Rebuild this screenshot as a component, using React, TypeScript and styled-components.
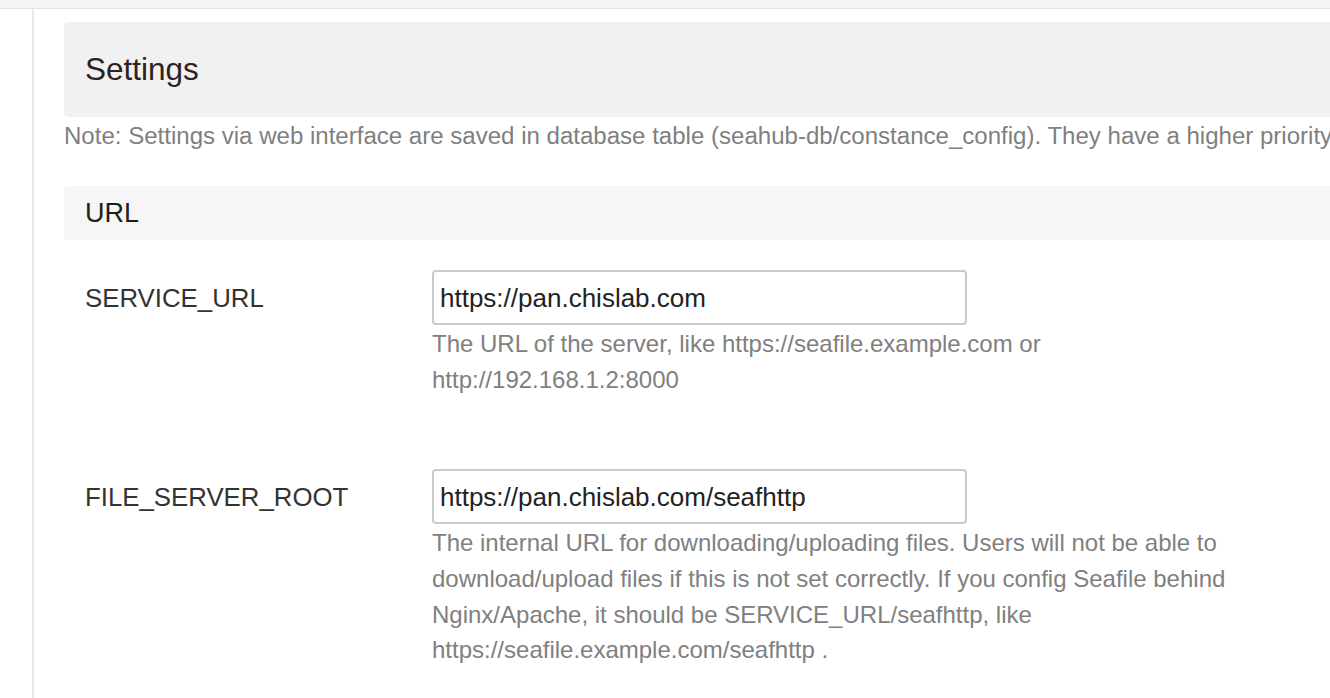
import React from "react";
import styled, { createGlobalStyle } from "styled-components";

const Global = createGlobalStyle`
  html, body { margin: 0; padding: 0; background: #fff; }
  body { font-family: "Liberation Sans", Arial, sans-serif; overflow: hidden; }
`;

const Page = styled.div`
  width: 1330px;
  height: 698px;
  display: flex;
  flex-direction: column;
  overflow: hidden;
`;

const TopBar = styled.div`
  height: 8px;
  flex-shrink: 0;
  background: #f4f4f4;
  border-bottom: 1px solid #e4e4e4;
`;

const Main = styled.div`
  flex: 1;
  display: flex;
  min-height: 0;
`;

const Sidebar = styled.div`
  width: 32px;
  flex-shrink: 0;
  border-right: 2px solid #e8e8e8;
`;

const Content = styled.div`
  flex-shrink: 0;
  width: 1400px;
  padding: 13px 0 0 30px;
`;

const TitleBox = styled.div`
  height: 95px;
  display: flex;
  align-items: center;
  padding-left: 21px;
  background: #f1f1f1;
  border-radius: 4px 0 0 4px;
  font-size: 31.5px;
  color: #2d2222;
`;

const Note = styled.p`
  margin: 1px 0 0;
  font-size: 24.05px;
  line-height: 36px;
  color: #7f7f7f;
  white-space: nowrap;
`;

const SectionHead = styled.div`
  margin-top: 32px;
  height: 54px;
  display: flex;
  align-items: center;
  padding-left: 21px;
  background: #f6f6f6;
  border-radius: 4px 0 0 4px;
  font-size: 27px;
  color: #1e1e1e;
`;

const Row = styled.div<{ $first?: boolean }>`
  display: flex;
  margin-top: ${(p) => (p.$first ? "30px" : "71.5px")};
`;

const Label = styled.div`
  width: 347px;
  padding-left: 21px;
  padding-top: 1px;
  flex-shrink: 0;
  font-size: 25.8px;
  line-height: 55px;
  color: #333;
`;

const Field = styled.div`
  display: flex;
  flex-direction: column;
`;

const Input = styled.input`
  box-sizing: border-box;
  width: 535px;
  height: 55px;
  padding: 2px 6px 0;
  border: 2px solid #cacaca;
  border-radius: 4px;
  font-family: "Liberation Sans", Arial, sans-serif;
  font-size: 26px;
  color: #222;
  background: #fff;
  outline: none;
`;

const Help = styled.div`
  width: 810px;
  margin-top: 1px;
  font-size: 24px;
  line-height: 35.8px;
  color: #808080;
`;

const fields = [
  {
    name: "SERVICE_URL",
    value: "https://pan.chislab.com",
    help: "The URL of the server, like https://seafile.example.com or http://192.168.1.2:8000",
  },
  {
    name: "FILE_SERVER_ROOT",
    value: "https://pan.chislab.com/seafhttp",
    help: "The internal URL for downloading/uploading files. Users will not be able to download/upload files if this is not set correctly. If you config Seafile behind Nginx/Apache, it should be SERVICE_URL/seafhttp, like https://seafile.example.com/seafhttp .",
  },
];

export default function App() {
  return (
    <Page>
      <Global />
      <TopBar />
      <Main>
        <Sidebar />
        <Content>
          <TitleBox>Settings</TitleBox>
          <Note>
            Note: Settings via web interface are saved in database table
            (seahub-db/constance_config). They have a higher priority over the
            settings in config files.
          </Note>
          <SectionHead>URL</SectionHead>
          {fields.map((f, i) => (
            <Row key={f.name} $first={i === 0}>
              <Label>{f.name}</Label>
              <Field>
                <Input defaultValue={f.value} readOnly />
                <Help>{f.help}</Help>
              </Field>
            </Row>
          ))}
        </Content>
      </Main>
    </Page>
  );
}
